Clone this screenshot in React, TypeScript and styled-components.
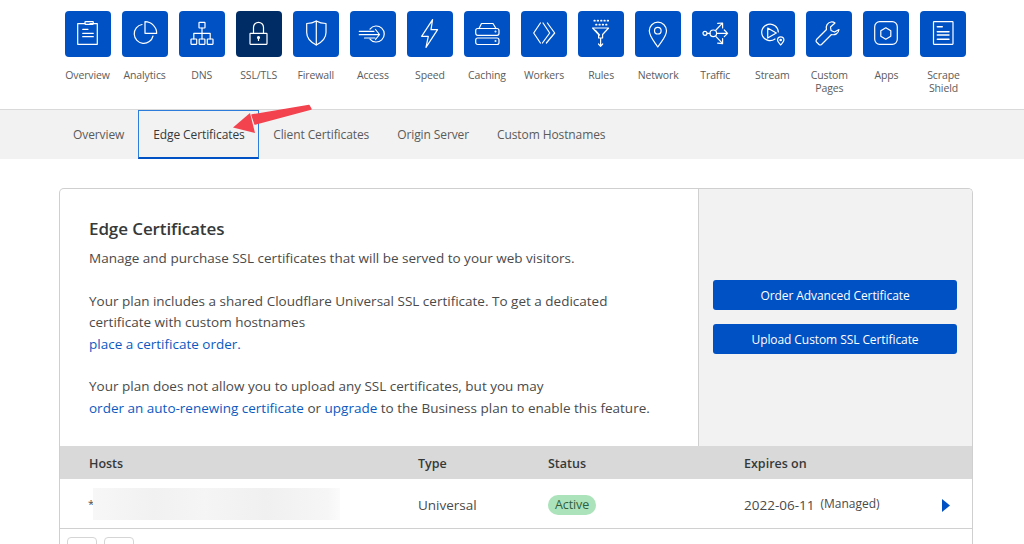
import React from 'react';
import styled, { createGlobalStyle } from 'styled-components';

const Global = createGlobalStyle`
  html, body { margin: 0; padding: 0; background: #fff; }
  body { font-family: "Open Sans", "Noto Sans", "Liberation Sans", sans-serif; color: #4a4a4a; overflow: hidden; }
  #root { width: 1024px; height: 544px; overflow: hidden; }
`;

const Page = styled.div`
  position: relative;
  width: 1024px;
  height: 544px;
  overflow: hidden;
`;
const TopNav = styled.nav`
  display: grid;
  grid-template-columns: repeat(16, 57.07px);
  padding: 11px 0 0 59px;
  height: 98px;
  box-sizing: content-box;
  border-bottom: 1px solid #d9d9d9;
`;
const NavItem = styled.div`
  display: flex;
  flex-direction: column;
  align-items: center;
`;
const IconTile = styled.div<{ $active?: boolean }>`
  width: 46px;
  height: 46px;
  border-radius: 4px;
  background: ${p => (p.$active ? '#002c66' : '#0051c3')};
  display: flex;
  align-items: center;
  justify-content: center;
  margin-bottom: 12px;
`;
const NavLabel = styled.span`
  font-size: 10.5px;
  line-height: 13px;
  color: #5c5c5c;
  text-align: center;
  white-space: pre-line;
  letter-spacing: -0.12px;
`;
const SubNav = styled.div`
  display: flex;
  align-items: stretch;
  height: 49px;
  background: #f2f2f2;
  padding-left: 59px;
`;
const Tab = styled.div<{ $active?: boolean }>`
  display: flex;
  align-items: center;
  box-sizing: border-box;
  font-size: 12px;
  color: #5a5a5a;
  letter-spacing: -0.1px;
  padding: 0 14px;
  margin-top: -1px;
  ${p => p.$active && `
    color: #36393a;
    border: 1px solid #2c7cdb;
    border-bottom: 2px solid #0051c3;
    width: 121px;
    padding: 0 14px;
    margin-top: 0;
    white-space: nowrap;
  `}
`;
const Card = styled.section`
  box-sizing: border-box;
  width: 914px;
  margin: 29px 0 0 59px;
  border: 1px solid #cfcfcf;
  border-radius: 5px 5px 0 0;
  border-bottom: none;
  overflow: hidden;
`;
const Intro = styled.div`
  display: flex;
  height: 257px;
`;
const IntroText = styled.div`
  box-sizing: border-box;
  width: 638px;
  padding: 28px 20px 0 29px;
  font-size: 13.5px;
  line-height: 21.5px;
  color: #4a4a4a;
`;
const Title = styled.h2`
  margin: 0 0 7px;
  font-size: 17px;
  line-height: 24px;
  font-weight: 600;
  color: #36393a;
  letter-spacing: -0.1px;
`;
const Para = styled.p`
  margin: 0 0 21px;
`;
const Link = styled.a`
  color: #0b5ac2;
`;
const Side = styled.aside`
  flex: 1;
  box-sizing: border-box;
  background: #f2f2f2;
  border-left: 1px solid #d0d0d0;
  padding: 91px 15px 0 14px;
  display: flex;
  flex-direction: column;
  gap: 14.5px;
`;
const Button = styled.button`
  height: 29.5px;
  border: none;
  border-radius: 3px;
  background: #0051c3;
  color: #fff;
  font: inherit;
  font-size: 12px;
  letter-spacing: -0.08px;
  padding: 2px 0 0;
`;
const columns = `grid-template-columns: 329px 130px 196px 1fr; padding-left: 29px;`;
const TableHead = styled.div`
  display: grid;
  ${columns}
  align-items: center;
  height: 33px;
  box-sizing: border-box;
  padding-top: 1px;
  background: #d9d9d9;
  font-size: 12.5px;
  font-weight: 600;
  color: #36393a;
`;
const TableRow = styled.div`
  display: grid;
  ${columns}
  align-items: center;
  height: 50px;
  box-sizing: border-box;
  border-bottom: 1px solid #d0d0d0;
  padding-top: 2px;
  font-size: 13.5px;
  color: #4a4a4a;
`;
const HostCell = styled.div`
  display: flex;
  align-items: center;
  height: 32px;
  margin: -2px 0 0 -1px;
`;
const Star = styled.span`
  font-size: 11px;
  width: 5px;
  margin-top: -1px;
`;
const Blurred = styled.div`
  width: 247px;
  height: 32px;
  background: linear-gradient(90deg, #f7f7f7, #f0f1f0 25%, #f5f5f5 45%, #eff0ef 70%, #f6f6f6 95%, #fbfbfb);
`;
const StatusPill = styled.span`
  display: inline-block;
  background: #ace3bb;
  color: #2f5f40;
  border-radius: 10px;
  font-size: 12.5px;
  line-height: 20px;
  padding: 0 7px;
  letter-spacing: -0.1px;
`;
const ExpiryCell = styled.div`
  display: flex;
  align-items: center;
  position: relative;
  white-space: nowrap;
`;
const Managed = styled.span`
  font-size: 12px;
  margin: -3px 0 0 6px;
`;
const Caret = styled.svg`
  position: absolute;
  left: 198px;
  top: 3px;
`;
const Pager = styled.div`
  display: flex;
  gap: 7px;
  margin: 8px 0 0 7px;
`;
const PageBox = styled.div`
  box-sizing: border-box;
  width: 30px;
  height: 20px;
  border: 1px solid #d5d5d5;
  border-radius: 4px;
`;
const Arrow = styled.svg`
  position: absolute;
  left: 225px;
  top: 98px;
  pointer-events: none;
`;

const IconSvg: React.FC<{ children: React.ReactNode }> = ({ children }) => (
  <svg width="30" height="30" viewBox="0 0 30 30" fill="none" stroke="#fff" strokeWidth="1.2" strokeLinejoin="round" strokeLinecap="round">
    {children}
  </svg>
);

const icons: Record<string, React.ReactNode> = {
  Overview: (<>
    <path d="M12 4.700H4.700v20.600h19.600V4.700H17" /><rect x="12" y="2.700" width="8.300" height="2.600" rx=".5" />
    <path d="M9.700 10.300H15M9.700 14.300h10.600M9.700 17.700h10.600" /></>),
  Analytics: (<>
    <path d="M12 5.500A9.500 9.500 0 1 0 23 17" /><path d="M15 2.700A11.700 11.700 0 0 1 26.700 14.300H15z" /></>),
  DNS: (<>
    <rect x="12" y="3.300" width="6" height="5.700" rx=".5" /><path d="M15 9v11M6.800 20v-5.700h16.400V20" />
    <rect x="4" y="20" width="5.700" height="5.300" rx=".5" /><rect x="12.200" y="20" width="5.700" height="5.300" rx=".5" /><rect x="20.300" y="20" width="5.700" height="5.300" rx=".5" /></>),
  'SSL/TLS': (<>
    <rect x="6" y="14.300" width="17" height="11" rx=".5" /><path d="M9.500 14.300V8.300a5 5 0 0 1 10 0v6" />
    <circle cx="14.500" cy="18.500" r="1" fill="#fff" /><path d="M14.500 18.500v3" /></>),
  Firewall: (<>
    <path d="M5.700 4.500C9 4.500 12.500 3.700 15.300 2c2.800 1.700 6.300 2.500 9.700 2.500v9c0 5.500-3.700 9.500-9.700 12.500-6-3-9.600-7-9.600-12.500z" /><path d="M15.300 2v24" /></>),
  Access: (<>
    <path d="M12 10A8 8 0 1 1 12 20" /><path d="M1.300 12.300H16M1.300 15.700h20.200M6.500 19H17M17.500 10.500l4 5-4 5" /></>),
  Speed: (<path d="M17.600.7 6.600 17.300h6.700L11 28.300l11.600-17.600H16z" />),
  Caching: (<>
    <path d="M7 9.500 9.500 4.500h11.500l3 5" /><rect x="3.700" y="9.500" width="23.300" height="6.800" rx="2" /><rect x="3.700" y="19" width="23.300" height="6.500" rx="2" />
    <circle cx="23.500" cy="12.500" r=".4" /><circle cx="23.500" cy="22" r=".4" /></>),
  Workers: (<path d="M11.400 4 4.700 14l6.700 10M14 4l6.700 10-7.300 10M18.400 4l7.300 10-8.300 10" />),
  Rules: (<>
    <path d="M8.300 1.700h.6M11.600 1.700h.6M15 1.700h.6M18.300 1.700h.6M21.600 1.700h.6M10 5.700h.6M13.300 5.700h.6M16.600 5.700h.6M20 5.700h.6" strokeWidth="1.700" />
    <path d="M6.600 9h16l-6 6.500V19h-4v-3.500zM9.500 11.500l4 4.500M14.600 19v8M12.500 25l2.100 2.300 2.100-2.300" /></>),
  Network: (<>
    <path d="M14.800 28C11 22 6.300 17.500 6.300 11.800a8.600 8.600 0 0 1 17.200 0c0 5.700-4.900 10.200-8.700 16.200z" /><circle cx="14.800" cy="11.700" r="3.300" /></>),
  Traffic: (<>
    <circle cx="5" cy="14.300" r="2" /><circle cx="13.300" cy="14.300" r="3.300" /><path d="M7 14.300h3M16.600 14.300h11M24.300 11l3.300 3.300-3.300 3.300M16 11 22 4.700M17.700 4.400l4.900-.4v5M16 17.600l6 6.300M17.700 24.200l4.900.4v-5" /></>),
  Stream: (<>
    <path d="M18 20A8.300 8.300 0 1 1 21.300 13" /><path d="M10.700 9 19.300 14 10.700 19z" />
    <path d="M23.700 26c-1.800-2.300-3.200-3.300-3.200-5a3.200 3.200 0 0 1 6.400 0c0 1.700-1.400 2.700-3.200 5z" /><circle cx="23.700" cy="21" r=".7" /></>),
  'Custom\nPages': (<path d="M17 3c-3.500.5-5.500 4-4.500 7.500L2.500 20.500a2 2 0 0 0 0 2.500L5 25.500a2 2 0 0 0 2.500 0l10-10c3.500 1 7-1 7.500-5L20.500 13 17 11.500l-.5-3.500L21 4c-1-.8-2.500-1.200-4-1z" />),
  Apps: (<>
    <rect x="3.700" y="2.700" width="22.600" height="22.600" rx="5" /><path d="m14.800 8.800 5 3v5.500l-5 3-5-3v-5.500z" /></>),
  'Scrape\nShield': (<>
    <rect x="5.500" y="2.700" width="19.500" height="22.600" rx=".5" /><path d="M9.300 7.700h5M9.300 12.700h11.700M9.300 16h11.700M9.300 20.300h11.700" strokeWidth="1.400" /></>),
};

const caretPoints = '0,0 8,6.500 0,13';

export default function App() {
  return (
    <Page>
      <Global />
      <TopNav>
        {Object.keys(icons).map(name => (
          <NavItem key={name}>
            <IconTile $active={name === 'SSL/TLS'}>
              <IconSvg>{icons[name]}</IconSvg>
            </IconTile>
            <NavLabel>{name}</NavLabel>
          </NavItem>
        ))}
      </TopNav>
      <SubNav>
        <Tab>Overview</Tab>
        <Tab $active>Edge Certificates</Tab>
        <Tab>Client Certificates</Tab>
        <Tab>Origin Server</Tab>
        <Tab>Custom Hostnames</Tab>
      </SubNav>
      <Card>
        <Intro>
          <IntroText>
            <Title>Edge Certificates</Title>
            <Para>Manage and purchase SSL certificates that will be served to your web visitors.</Para>
            <Para>
              Your plan includes a shared Cloudflare Universal SSL certificate. To get a dedicated<br />
              certificate with custom hostnames<br />
              <Link>place a certificate order.</Link>
            </Para>
            <Para>
              Your plan does not allow you to upload any SSL certificates, but you may<br />
              <Link>order an auto-renewing certificate</Link> or <Link>upgrade</Link> to the Business plan to enable this feature.
            </Para>
          </IntroText>
          <Side>
            <Button>Order Advanced Certificate</Button>
            <Button>Upload Custom SSL Certificate</Button>
          </Side>
        </Intro>
        <TableHead>
          <span>Hosts</span>
          <span>Type</span>
          <span>Status</span>
          <span>Expires on</span>
        </TableHead>
        <TableRow>
          <HostCell><Star>*</Star><Blurred /></HostCell>
          <span>Universal</span>
          <span><StatusPill>Active</StatusPill></span>
          <ExpiryCell>
            2022-06-11<Managed>(Managed)</Managed>
            <Caret width="8" height="13" viewBox="0 0 8 13"><polygon points={caretPoints} fill="#0051c3" /></Caret>
          </ExpiryCell>
        </TableRow>
        <Pager><PageBox /><PageBox /></Pager>
      </Card>
      <Arrow width="90" height="40" viewBox="0 0 90 40">
        <path d="M84 7.500 86 11 30 26 27 17z" fill="#f2434f" strokeLinejoin="round" stroke="#f2434f" strokeWidth="1.500" />
        <polygon points="8,29.500 25,15 30,35" fill="#f2434f" />
      </Arrow>
    </Page>
  );
}
